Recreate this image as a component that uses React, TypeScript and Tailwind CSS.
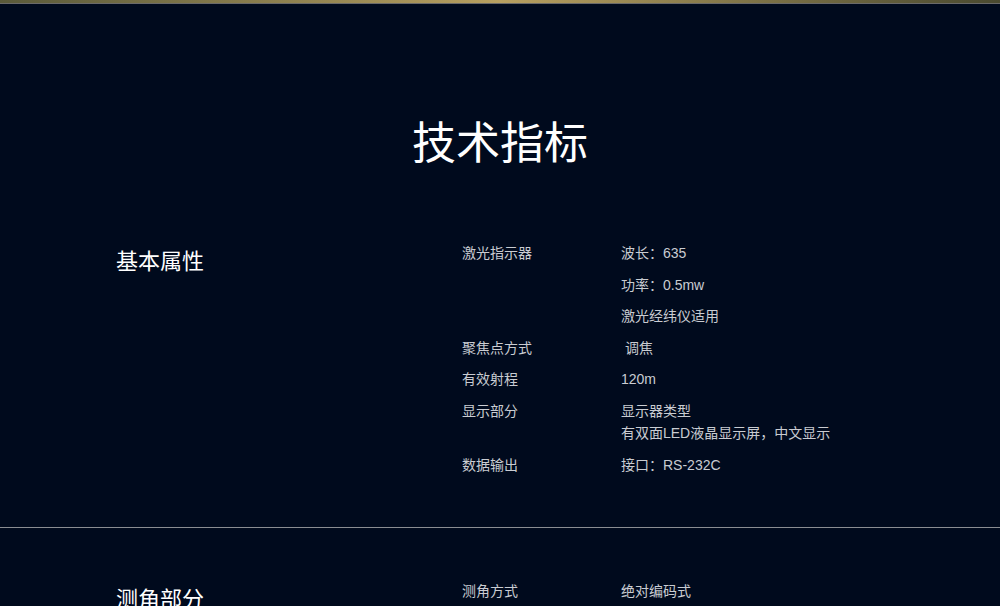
export default function App() {
  const rows: [string, string[]][] = [
    ["激光指示器", ["波长：635"]],
    ["", ["功率：0.5mw"]],
    ["", ["激光经纬仪适用"]],
    ["聚焦点方式", ["\u00a0调焦"]],
    ["有效射程", ["120m"]],
    ["显示部分", ["显示器类型", "有双面LED液晶显示屏，中文显示"]],
    ["数据输出", ["接口：RS-232C"]],
  ];
  const font = { fontFamily: '"Liberation Sans","Noto Sans CJK SC",sans-serif' };
  return (
    <div className="w-[1000px] h-[606px] overflow-hidden bg-[#000a1d] text-[#c9ccd2]" style={font}>
      <div className="h-[3px] bg-gradient-to-r from-[#5a5a3a] via-[#b8a060] to-[#4a4a30]" />
      <div className="h-[1px] bg-[#6a6a6a]" />
      <div className="h-[524px] border-b border-[#8a8d92]">
        <h1 className="pt-[110px] text-center text-[44px] leading-[60px] text-white">技术指标</h1>
        <div className="flex mt-[68px]">
          <div className="w-[462px] pl-[116px] text-[22px] leading-[28px] text-white mt-[6px]">基本属性</div>
          <div className="flex flex-col gap-[9px] text-[14px] leading-[22.5px]">
            {rows.map(([l, v], i) => (
              <div key={i} className="flex">
                <div className="w-[159px]">{l}</div>
                <div>{v.map((t) => <div key={t}>{t}</div>)}</div>
              </div>
            ))}
          </div>
        </div>
      </div>
      <div className="flex pt-[52px]">
        <div className="w-[462px] pl-[116px] text-[22px] leading-[28px] text-white mt-[6px]">测角部分</div>
        <div className="flex text-[14px] leading-[22px]">
          <div className="w-[159px]">测角方式</div>
          <div>绝对编码式</div>
        </div>
      </div>
    </div>
  );
}
